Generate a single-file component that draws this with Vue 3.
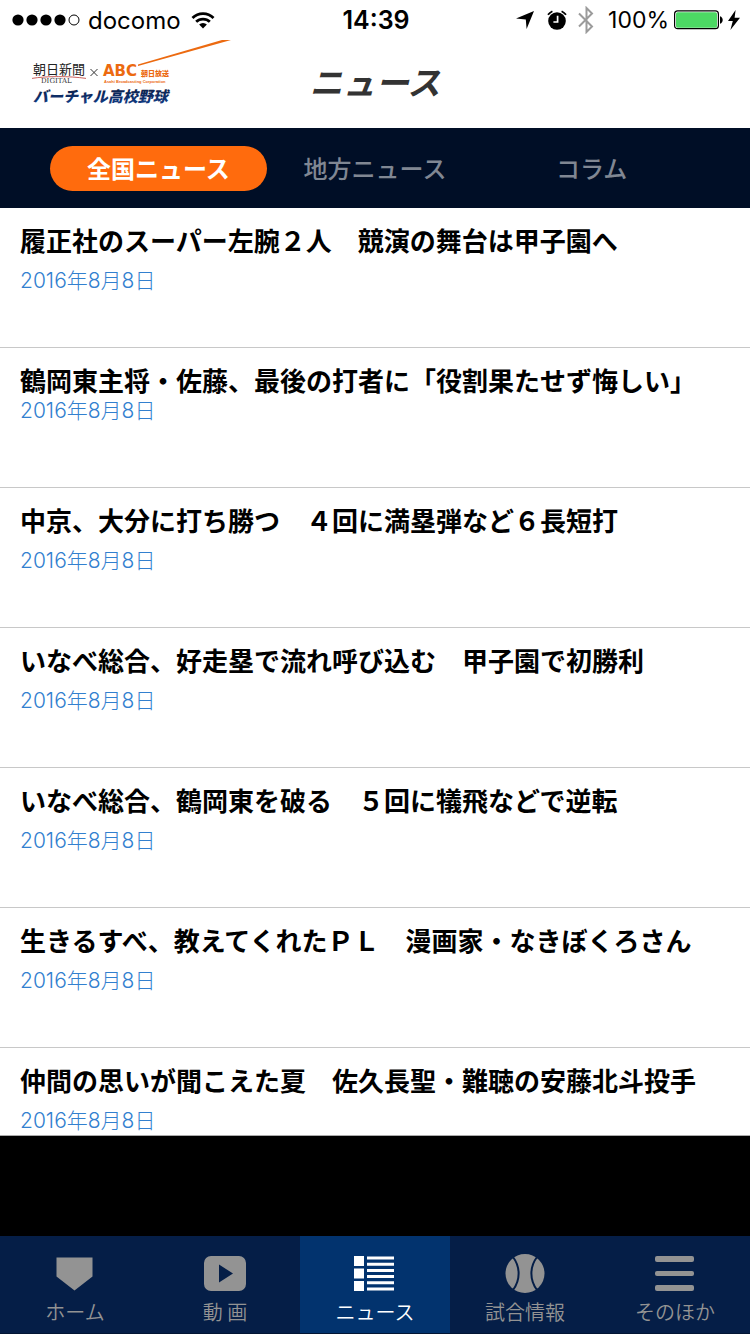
<script setup>
import { ref } from 'vue'

const tabs = ['全国ニュース', '地方ニュース', 'コラム']
const activeTab = ref(0)

const articles = [
  { title: '履正社のスーパー左腕２人　競演の舞台は甲子園へ', date: '2016年8月8日' },
  { title: '鶴岡東主将・佐藤、最後の打者に「役割果たせず悔しい」', date: '2016年8月8日', tight: true },
  { title: '中京、大分に打ち勝つ　４回に満塁弾など６長短打', date: '2016年8月8日' },
  { title: 'いなべ総合、好走塁で流れ呼び込む　甲子園で初勝利', date: '2016年8月8日' },
  { title: 'いなべ総合、鶴岡東を破る　５回に犠飛などで逆転', date: '2016年8月8日' },
  { title: '生きるすべ、教えてくれたＰＬ　漫画家・なきぼくろさん', date: '2016年8月8日' },
  { title: '仲間の思いが聞こえた夏　佐久長聖・難聴の安藤北斗投手', date: '2016年8月8日' }
]

const navItems = [
  { id: 'home', label: 'ホーム' },
  { id: 'video', label: '動 画' },
  { id: 'news', label: 'ニュース' },
  { id: 'game', label: '試合情報' },
  { id: 'more', label: 'そのほか' }
]
const activeNav = ref('news')
</script>

<template>
  <div class="app">
    <div class="status">
      <div class="status-left">
        <svg class="signal" width="68" height="12" viewBox="0 0 68 12" aria-hidden="true">
          <circle cx="6" cy="6" r="5.6" />
          <circle cx="20" cy="6" r="5.6" />
          <circle cx="34" cy="6" r="5.6" />
          <circle cx="48" cy="6" r="5.6" />
          <circle cx="62" cy="6" r="5" fill="none" stroke="#000" stroke-width="1" />
        </svg>
        <span class="carrier">docomo</span>
        <svg width="24" height="19" viewBox="0 0 26 20" aria-hidden="true">
          <g fill="none" stroke="#000" stroke-width="3">
            <path d="M1.6 7.2a16.2 16.2 0 0 1 22.8 0" />
            <path d="M5.6 11.4a10.6 10.6 0 0 1 14.8 0" />
          </g>
          <path d="M8.8 14.4a6 6 0 0 1 8.4 0L13 18.8z" />
        </svg>
      </div>
      <span class="clock">14:39</span>
      <div class="status-right">
        <svg width="18" height="18" viewBox="0 0 18 18" aria-hidden="true">
          <path d="M18 0L10.6 18L9.8 8.4L0 7.6z" />
        </svg>
        <svg class="alarm" width="20" height="20" viewBox="0 0 20 20" aria-hidden="true">
          <circle cx="10" cy="11" r="8.8" />
          <path d="M1 4.8A11 11 0 0 1 5.4 1.2M14.6 1.2A11 11 0 0 1 19 4.8" fill="none" stroke="#000" stroke-width="1.8" />
          <path d="M10.6 5.8v6.2H6.4" fill="none" stroke="#fff" stroke-width="1.7" />
        </svg>
        <svg class="bluetooth" width="16" height="28" viewBox="0 0 16 28" aria-hidden="true">
          <path d="M1 7.5L14 20.5L8.5 26V2L14 7.5L1 20.5" fill="none" stroke="#9b9b9b" stroke-width="2" />
        </svg>
        <span class="percent">100%</span>
        <svg width="49" height="20" viewBox="0 0 49 20" aria-hidden="true">
          <rect x="0.6" y="0.9" width="43.8" height="17.8" rx="3" fill="#fff" stroke="#000" stroke-width="1.2" />
          <rect x="2" y="2.3" width="41" height="15.4" rx="1.6" fill="#4cd964" />
          <path d="M46 6.3c3.6 1 3.6 6.4 0 7.4z" />
        </svg>
        <svg class="bolt" width="12" height="20" viewBox="0 0 12 20" aria-hidden="true">
          <path d="M7.6 0L0 11h4.8L2.4 20L12 7.8H6.6z" />
        </svg>
      </div>
    </div>

    <header class="header">
      <svg class="logo" width="200" height="88" viewBox="0 0 200 88">
        <defs>
          <linearGradient id="navy" x1="0" x2="0" y1="0" y2="1">
            <stop offset="0" stop-color="#0a1a3c" />
            <stop offset="1" stop-color="#123f8c" />
          </linearGradient>
        </defs>
        <text class="logo-asahi" x="1" y="34">朝日新聞</text>
        <path d="M0 38.4C14 36 38 36 54 38.4" fill="none" stroke="#c4504c" stroke-width="0.9" />
        <text class="logo-digital" x="9" y="43">DIGITAL</text>
        <path d="M58.5 29l7 7M65.5 29l-7 7" stroke="#333" stroke-width="1" />
        <text class="logo-abc" x="71" y="36">ABC</text>
        <text class="logo-hoso" x="109" y="36">朝日放送</text>
        <text class="logo-corp" x="72" y="43">Asahi Broadcasting Corporation</text>
        <path d="M106 24.6L190 0H199L106 26z" fill="#ec6a10" />
        <text class="logo-name" x="1" y="62" fill="url(#navy)">バーチャル高校野球</text>
      </svg>
      <h1 class="title">ニュース</h1>
    </header>

    <div class="tabs" role="tablist">
      <button
        v-for="(tab, i) in tabs"
        :key="tab"
        type="button"
        role="tab"
        class="tab"
        :class="{ active: i === activeTab }"
        :aria-selected="i === activeTab"
        @click="activeTab = i"
      >{{ tab }}</button>
    </div>

    <main class="list">
      <a v-for="a in articles" :key="a.title" href="#" class="article" :class="{ tight: a.tight }">
        <h2>{{ a.title }}</h2>
        <time>{{ a.date }}</time>
      </a>
    </main>

    <div class="banner"></div>

    <nav class="nav">
      <a
        v-for="item in navItems"
        :key="item.id"
        href="#"
        class="nav-item"
        :class="{ active: item.id === activeNav }"
        @click.prevent="activeNav = item.id"
      >
        <svg width="44" height="40" viewBox="0 0 44 40" fill="currentColor" aria-hidden="true">
          <path v-if="item.id === 'home'" d="M3.5 3.5H39.5V22.500L21.500 36.5L3.500 22.500z" />
          <path v-else-if="item.id === 'video'" fill-rule="evenodd" d="M8 2H36a7 7 0 0 1 7 7V30a7 7 0 0 1-7 7H8a7 7 0 0 1-7-7V9a7 7 0 0 1 7-7zM16 10.5V28.5L30 19.5z" />
          <g v-else-if="item.id === 'news'">
            <path d="M1 2h10v10H1zM1 14.5h10v10H1zM1 27h10v10H1z" />
            <path d="M14 2.5h27v3H14zM14 8.7h27v3H14zM14 15h27v3H14zM14 21h27v3H14zM14 27.3h27v3H14zM14 33.5h27v3H14z" />
          </g>
          <g v-else-if="item.id === 'game'">
            <circle cx="22" cy="19.5" r="19.5" />
            <path class="seam" d="M10 3C17.500 13 17.500 26 10 36M34 3C26.500 13 26.500 26 34 36" />
          </g>
          <g v-else>
            <rect x="2" y="2" width="39" height="6" rx="2" />
            <rect x="2" y="17" width="39" height="5" rx="2" />
            <rect x="2" y="31" width="39" height="6" rx="2" />
          </g>
        </svg>
        <span>{{ item.label }}</span>
      </a>
    </nav>
  </div>
</template>

<style>
body {
  background: #000;
}
</style>

<style scoped>
.app {
  display: flex;
  flex-direction: column;
  height: 100vh;
  overflow: hidden;
  font-family: "Noto Sans CJK JP", sans-serif;
  color: #000;
}

.status {
  display: grid;
  grid-template-columns: 1fr auto 1fr;
  align-items: center;
  height: 40px;
  flex: none;
  padding: 0 10px 0 12px;
  background: #fff;
  font-family: Inter, sans-serif;
  font-size: 24px;
}

.status-left,
.status-right {
  display: flex;
  align-items: center;
}

.status-right {
  justify-content: flex-end;
}

.carrier {
  margin: 0 10px 0 8px;
}

.clock {
  font-size: 25px;
  font-weight: 600;
}

.alarm {
  margin-left: 13px;
}

.bluetooth {
  margin-left: 11px;
}

.percent {
  margin: 0 5px 0 14px;
  font-size: 23px;
}

.bolt {
  margin-left: 5px;
}

.header {
  display: grid;
  grid-template-columns: 1fr auto 1fr;
  align-items: center;
  height: 88px;
  flex: none;
  background: #fff;
}

.logo {
  margin-left: 32px;
}

.logo-asahi {
  font-size: 13px;
  fill: #222;
}

.logo-digital {
  font: 7px "DejaVu Serif", serif;
  fill: #333;
}

.logo-abc {
  font: bold 15px "DejaVu Sans", sans-serif;
  fill: #ec6a10;
}

.logo-hoso {
  font-size: 7px;
  font-weight: 900;
  fill: #ec6a10;
}

.logo-corp {
  font: bold 4px "Liberation Sans", sans-serif;
  fill: #ec6a10;
}

.logo-name {
  font-size: 15px;
  font-weight: 900;
  font-style: italic;
}

.title {
  margin: 0;
  padding-bottom: 6px;
  font-size: 33px;
  font-weight: 700;
  font-style: italic;
  color: #333;
}

.tabs {
  display: flex;
  align-items: center;
  height: 80px;
  flex: none;
  padding: 0 50px;
  box-sizing: border-box;
  background: #000e26;
}

.tab {
  flex: 1;
  height: 45px;
  padding: 0;
  border: 0;
  border-radius: 23px;
  background: none;
  font-family: inherit;
  font-size: 24px;
  font-weight: 500;
  line-height: 44px;
  color: #808793;
}

.tab.active {
  background: #ff6b0d;
  font-weight: 700;
  color: #fff;
}

.list {
  flex: 1;
  min-height: 0;
  overflow: hidden;
  box-sizing: border-box;
  background: #fff;
  border-bottom: 1px solid #aaa;
}

.article {
  display: block;
  height: 140px;
  box-sizing: border-box;
  padding: 14px 20px 0;
  border-bottom: 1px solid #c8c8c8;
  color: inherit;
  text-decoration: none;
}

.article h2 {
  margin: 0 0 12px;
  font-size: 26px;
  font-weight: 700;
  line-height: 36px;
  white-space: nowrap;
}

.article.tight h2 {
  margin-bottom: 2px;
}

.article time {
  display: block;
  font-family: Inter, "Noto Sans CJK JP", sans-serif;
  font-size: 21px;
  font-weight: 300;
  line-height: 22px;
  color: #3280cf;
}

.banner {
  height: 100px;
  flex: none;
  background: #000;
}

.nav {
  display: flex;
  height: 98px;
  flex: none;
}

.nav-item {
  flex: 1;
  display: flex;
  flex-direction: column;
  align-items: center;
  box-sizing: border-box;
  padding-top: 18px;
  border-bottom: 1px solid #021533;
  background: #051e47;
  color: #939393;
  font-size: 20px;
  font-weight: 350;
  line-height: 36px;
  text-decoration: none;
}

.nav-item.active {
  background: #02336e;
  color: #fff;
}

.seam {
  fill: none;
  stroke: #051e47;
  stroke-width: 2;
}
</style>
